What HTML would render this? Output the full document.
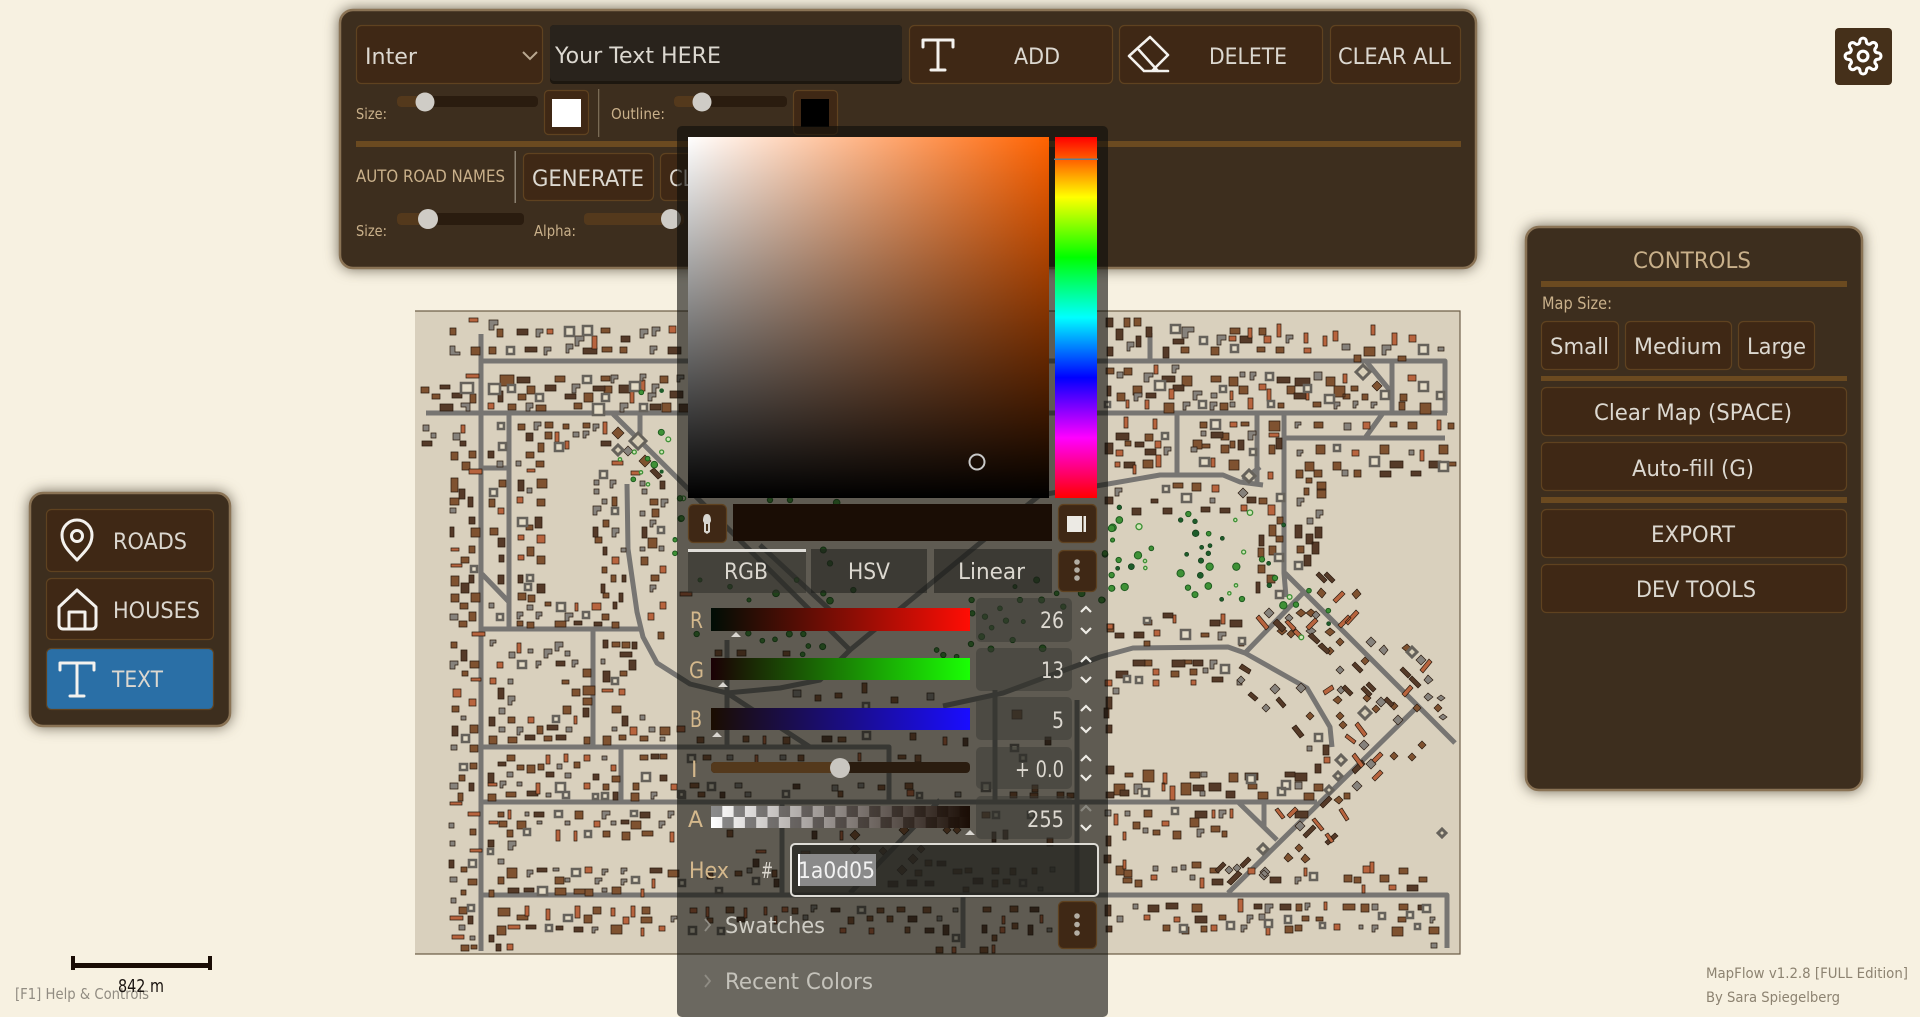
<!DOCTYPE html>
<html><head><meta charset="utf-8"><title>MapFlow</title>
<style>
html,body{margin:0;padding:0;background:#f7f1e1;overflow:hidden}
svg{display:block;position:absolute;left:0;top:0}
text{font-family:"DejaVu Sans","Liberation Sans",sans-serif;fill:#dcd8d0}
.t{fill:#c9b08a}
.s{filter:drop-shadow(0 0 7px rgba(40,30,15,.65))}
.b{fill:#3f2815;stroke:#5f4220;stroke-width:1.2}
.p{fill:#3d2e1e;stroke:#8a7355;stroke-width:2.5}
.ic{fill:none;stroke:#f4f2ee;stroke-width:3;stroke-linecap:round;stroke-linejoin:round}
.ch{fill:none;stroke:#eeece6;stroke-width:2.2}
</style></head><body>
<svg width="1920" height="1017" viewBox="0 0 1920 1017" xmlns="http://www.w3.org/2000/svg">
<defs>
<linearGradient id="hw"><stop offset="0" stop-color="#fff"/><stop offset="1" stop-color="#ff6200"/></linearGradient>
<linearGradient id="vb" x2="0" y2="1"><stop offset="0" stop-color="#000" stop-opacity="0"/><stop offset="1" stop-color="#000"/></linearGradient>
<linearGradient id="hue" x2="0" y2="1"><stop offset="0" stop-color="#f00"/><stop offset=".1667" stop-color="#ff0"/><stop offset=".3333" stop-color="#0f0"/><stop offset=".5" stop-color="#0ff"/><stop offset=".6667" stop-color="#00f"/><stop offset=".8333" stop-color="#f0f"/><stop offset="1" stop-color="#f00"/></linearGradient>
<linearGradient id="gr"><stop offset="0" stop-color="#000d05"/><stop offset="1" stop-color="#ff0d05"/></linearGradient>
<linearGradient id="gg"><stop offset="0" stop-color="#1a0005"/><stop offset="1" stop-color="#1aff05"/></linearGradient>
<linearGradient id="gb"><stop offset="0" stop-color="#1a0d00"/><stop offset="1" stop-color="#1a0dff"/></linearGradient>
<linearGradient id="ga"><stop offset="0" stop-color="#1a0d05" stop-opacity="0"/><stop offset="1" stop-color="#1a0d05"/></linearGradient>
<pattern id="chk" x="711" y="806" width="22.6" height="22" patternUnits="userSpaceOnUse"><rect width="22.6" height="22" fill="#fff"/><rect width="11.3" height="11" fill="#8c8c8c"/><rect x="11.3" y="11" width="11.3" height="11" fill="#8c8c8c"/></pattern>
<clipPath id="mapc"><rect x="415" y="311" width="1045" height="644"/></clipPath>
</defs>
<rect width="1920" height="1017" fill="#f7f1e1"/>

<!-- MAP -->
<rect x="415" y="311" width="1045" height="643" fill="#d9d0bd"/>
<path d="M415 311H1460V954H415" fill="none" stroke="#6f5f4a" stroke-width="1.2"/>
<g clip-path="url(#mapc)">
<g fill="none" stroke="#777572" stroke-width="5" stroke-linejoin="round">
<path d="M481 334V951M481 361H1445V413M426 413H1447M1150 333V361M1365 360L1392 393M1392 360V413"/>
<path d="M509 413V629M481 468H509M482 574L509 602M481 629H640M627 484L628 549L637 612L643 637L657 663L690 684L727 693L780 688L820 680L850 650"/>
<path d="M613 414L850 650L980 543L1040 495L1108 484L1160 475L1223 475L1240 482L1263 485M1243 480L1260 467M1257 413V485M1177 413V475M1284 413V573L1286 597"/>
<path d="M1284 438H1445M1365 438L1383 413M640 414V440M760 545L830 610"/>
<path d="M943 706L1003 693L1100 657L1133 648L1228 647L1245 653L1307 688L1330 727L1332 747M1285 573L1455 743M1245 653L1303 593M1417 707L1228 893"/>
<path d="M481 747H889V800M593 631V747M621 747V802M727 640V746M727 693L810 747M481 802H1317M1238 802L1277 840M1264 802V827M481 895H1447V948M782 802V893M1077 700V895M995 690V800M940 800L850 893M963 895V948"/>
</g>
<g stroke="#2a1a0e" stroke-width=".7">
<path fill="#7f5230" d="M450 328h6v7h-6zM497 329h6v8h-6zM601 328h9v5h-9zM471 347h9v8h-9zM489 347h7v7h-7zM602 347h10v5h-10zM620 347h7v6h-7zM500 375h14v11h-14zM555 376h10v6h-10zM601 376h9v5h-9zM660 376h8v7h-8zM421 387h8v6h-8zM527 386h8v8h-8zM604 386h8v7h-8zM432 394h8v5h-8zM470 394h6v9h-6zM518 394h8v6h-8zM584 393h9v9h-9zM508 404h8v6h-8zM536 405h10v6h-10zM574 403h8v6h-8zM662 403h9v9h-9zM1124 318h6v9h-6zM1134 318h7v8h-7zM1181 347h8v6h-8zM1230 328h10v6h-10zM1259 328h7v7h-7zM1211 347h8v8h-8zM1257 347h8v5h-8zM1276 347h8v6h-8zM1364 347h11v9h-11zM1354 355h7v7h-7zM1398 356h8v5h-8zM1106 368h8v6h-8zM1124 368h8v7h-8zM1182 376h10v10h-10zM1211 376h10v6h-10zM1229 377h9v9h-9zM1326 377h9v9h-9zM1133 386h9v9h-9zM1239 386h9v8h-9zM1287 386h8v8h-8zM1334 386h11v11h-11zM1351 386h7v5h-7zM1117 393h8v8h-8zM1343 394h7v5h-7zM1362 394h6v6h-6zM1400 394h7v7h-7zM1164 403h10v10h-10zM1220 403h8v7h-8zM1278 403h6v5h-6zM1313 402h8v5h-8zM1399 402h6v8h-6zM1420 403h11v11h-11zM1200 422h7v6h-7zM1241 422h8v4h-8zM1145 434h8v7h-8zM1221 433h8v7h-8zM1269 421h11v10h-11zM1193 440h9v9h-9zM1230 441h5v7h-5zM1125 441h6v5h-6zM1221 445h8v8h-8zM1202 444h8v4h-8zM1269 445h6v9h-6zM1143 460h10v8h-10zM1229 460h10v10h-10zM1314 422h9v6h-9zM1390 422h7v5h-7zM1408 422h9v7h-9zM1448 423h6v6h-6zM1316 445h9v9h-9zM1380 445h9v9h-9zM1439 445h9v9h-9zM1305 462h9v9h-9zM1333 462h8v8h-8zM1447 462h9v4h-9zM1296 470h7v8h-7zM1314 470h8v7h-8zM1354 470h7v7h-7zM1306 478h6v5h-6zM1304 488h5v7h-5zM1317 489h9v9h-9zM1317 482h9v8h-9zM1173 483h10v5h-10zM1192 483h9v8h-9zM1259 498h8v6h-8zM1277 517h6v7h-6zM1269 525h7v11h-7zM1276 536h7v6h-7zM1258 548h6v9h-6zM1269 546h7v9h-7zM1297 546h7v7h-7zM1258 565h7v8h-7zM1267 575h8v8h-8zM1144 620h8v5h-8zM1201 633h8v4h-8zM1107 624h7v8h-7zM1144 641h6v5h-6zM1239 641h5v5h-5z"/>
<path fill="#7f5230" d="M518 424h7v6h-7zM545 422h8v6h-8zM545 432h7v7h-7zM563 424h6v5h-6zM583 423h7v5h-7zM538 443h6v9h-6zM526 452h8v6h-8zM536 461h8v6h-8zM537 479h10v9h-10zM537 499h8v7h-8zM526 525h7v5h-7zM527 547h7v9h-7zM537 556h8v8h-8zM518 593h8v7h-8zM528 595h7v7h-7zM545 602h6v4h-6zM527 622h7v6h-7zM517 621h6v5h-6zM602 614h7v6h-7zM555 621h11v6h-11zM612 622h7v6h-7zM603 520h6v7h-6zM595 537h7v6h-7zM612 497h5v9h-5zM602 567h5v6h-5zM611 575h5v7h-5zM603 593h6v5h-6zM650 499h8v6h-8zM652 509h7v8h-7zM648 538h9v10h-9zM641 557h7v8h-7zM651 575h8v6h-8zM658 632h6v7h-6zM469 451h7v7h-7zM451 452h7v8h-7zM462 462h8v8h-8zM451 478h7v14h-7zM450 498h9v7h-9zM471 528h9v9h-9zM469 546h6v7h-6zM461 557h8v6h-8zM451 576h8v10h-8zM451 594h8v8h-8zM471 593h9v9h-9zM460 603h8v6h-8zM469 612h7v9h-7zM459 621h8v6h-8zM451 642h6v6h-6zM470 661h9v7h-9zM462 671h6v5h-6zM452 706h7v6h-7zM470 725h8v8h-8zM470 745h8v7h-8zM470 763h7v6h-7zM459 775h6v6h-6zM458 793h5v8h-5zM470 829h6v6h-6zM461 867h6v5h-6zM468 879h9v6h-9zM461 890h5v5h-5zM459 907h8v7h-8zM461 945h8v6h-8zM471 945h6v4h-6zM499 480h7v7h-7zM489 499h6v8h-6zM490 528h8v7h-8zM583 669h8v8h-8zM562 680h7v4h-7zM583 686h12v9h-12zM572 689h8v7h-8zM583 698h9v7h-9zM563 706h8v8h-8zM508 717h7v6h-7zM537 726h6v8h-6zM489 736h8v8h-8zM508 737h9v6h-9zM544 736h8v5h-8zM584 737h6v7h-6zM612 642h8v5h-8zM622 642h8v6h-8zM620 671h7v5h-7zM612 706h9v7h-9zM660 727h10v8h-10zM603 736h8v9h-8zM619 735h7v5h-7zM640 736h8v5h-8zM507 755h8v6h-8zM517 765h7v5h-7zM527 765h8v8h-8zM538 764h6v6h-6zM574 762h6v6h-6zM640 755h8v5h-8zM612 776h8v6h-8zM660 754h7v5h-7zM603 784h6v6h-6zM633 783h6v7h-6zM488 794h8v7h-8zM506 792h10v5h-10zM631 793h8v8h-8zM498 812h6v5h-6zM575 811h8v8h-8zM499 821h8v6h-8zM517 821h9v8h-9zM631 821h10v8h-10zM507 830h6v7h-6zM603 831h7v6h-7zM622 832h8v8h-8zM642 831h11v5h-11zM507 868h10v10h-10zM668 870h11v7h-11zM498 877h6v7h-6zM555 877h9v7h-9zM489 890h5v7h-5zM555 888h11v7h-11zM574 889h11v5h-11zM585 889h8v7h-8zM612 887h9v7h-9zM498 908h12v8h-12zM593 907h8v7h-8zM642 907h8v7h-8zM517 915h11v5h-11zM584 915h8v8h-8zM641 917h11v6h-11zM497 926h9v9h-9zM611 925h11v9h-11z"/>
<path fill="#7f5230" d="M1144 660h8v6h-8zM1183 660h9v4h-9zM1171 671h8v6h-8zM1190 669h7v6h-7zM1125 773h8v4h-8zM1143 770h11v12h-11zM1190 772h10v6h-10zM1229 773h9v9h-9zM1114 784h11v11h-11zM1181 783h10v12h-10zM1248 784h9v5h-9zM1314 784h9v7h-9zM1258 792h10v7h-10zM1304 793h10v7h-10zM1344 793h6v6h-6zM1144 810h8v7h-8zM1190 818h9v9h-9zM1133 822h7v7h-7zM1153 830h7v5h-7zM1173 831h8v8h-8zM1222 831h5v6h-5zM1211 826h9v6h-9zM1116 866h8v9h-8zM1124 870h8v7h-8zM1192 862h9v6h-9zM1210 868h9v5h-9zM1123 878h9v5h-9zM1135 880h7v7h-7zM1344 875h8v7h-8zM1354 877h7v6h-7zM1380 875h9v7h-9zM1399 868h9v6h-9zM1419 877h8v5h-8zM1192 904h10v8h-10zM1296 904h6v7h-6zM1343 904h12v6h-12zM1361 904h8v8h-8zM1399 904h9v6h-9zM1219 915h7v5h-7zM1302 916h7v5h-7zM1316 917h7v4h-7zM1398 917h8v5h-8zM1163 925h7v6h-7zM1182 927h7v7h-7zM1201 926h6v6h-6zM1285 926h8v7h-8zM1295 925h7v6h-7zM1429 927h10v7h-10zM1392 927h11v9h-11zM715 650h7v6h-7zM737 650h9v6h-9zM783 651h7v5h-7zM815 695h6v6h-6zM835 693h7v5h-7zM862 683h5v10h-5zM891 697h7v6h-7zM697 737h7v6h-7zM743 736h6v6h-6zM783 737h7v7h-7zM838 737h8v5h-8zM910 733h6v7h-6zM1012 710h10v9h-10zM703 755h8v5h-8zM798 755h6v6h-6zM898 755h8v4h-8zM915 755h6v7h-6zM690 783h9v5h-9zM878 785h7v5h-7zM905 783h8v6h-8zM1032 785h6v7h-6zM698 792h7v5h-7zM838 791h5v6h-5zM1010 792h7v6h-7zM1030 793h8v5h-8zM1057 792h7v6h-7zM1067 793h7v5h-7zM727 830h6v7h-6zM982 812h8v6h-8zM1047 838h6v8h-6zM772 870h5v7h-5zM735 871h7v5h-7zM707 873h6v6h-6zM925 860h7v6h-7zM915 870h7v6h-7zM953 869h9v5h-9zM965 868h7v5h-7zM992 868h7v6h-7zM1010 868h6v7h-6zM1032 868h5v6h-5zM992 880h6v7h-6zM1003 879h7v5h-7zM963 887h6v5h-6zM726 907h8v6h-8zM792 908h6v6h-6zM877 908h7v5h-7zM897 907h8v5h-8zM923 907h8v6h-8zM983 907h8v5h-8zM1010 906h8v6h-8zM707 918h6v5h-6zM848 917h6v7h-6zM867 916h6v5h-6zM887 916h6v6h-6zM1012 923h6v6h-6zM905 927h5v6h-5zM992 935h5v6h-5zM936 947h7v6h-7zM980 947h8v6h-8z"/>
<path fill="#553a28" d="M517 329h11v6h-11zM621 336h9v6h-9zM583 348h14v6h-14zM525 347h12v5h-12zM668 347h13v7h-13zM517 377h13v6h-13zM440 385h10v4h-10zM545 385h11v6h-11zM593 386h12v5h-12zM619 385h13v8h-13zM670 391h13v7h-13zM452 393h10v5h-10zM498 391h5v11h-5zM565 394h11v5h-11zM440 404h13v7h-13zM650 404h11v6h-11zM679 404h15v8h-15zM1106 318h7v9h-7zM1116 329h7v11h-7zM1146 327h6v10h-6zM1136 336h5v11h-5zM1107 347h6v9h-6zM1163 347h6v11h-6zM1173 339h11v5h-11zM1240 336h12v7h-12zM1162 376h13v6h-13zM1277 377h13v6h-13zM1295 378h15v8h-15zM1107 386h4v10h-4zM1173 385h11v6h-11zM1146 393h10v5h-10zM1294 393h13v6h-13zM1116 433h13v7h-13zM1211 432h12v6h-12zM1276 438h6v11h-6zM1105 443h8v11h-8zM1135 442h9v5h-9zM1238 440h6v10h-6zM1145 449h11v6h-11zM1124 462h11v6h-11zM1390 461h13v7h-13zM1429 461h12v7h-12zM1380 471h11v6h-11zM1411 471h10v5h-10zM1247 497h9v6h-9zM1105 497h8v7h-8zM1151 499h7v4h-7zM1132 508h9v7h-9zM1163 508h9v6h-9zM1201 507h9v5h-9zM1220 508h10v5h-10zM1315 527h7v11h-7zM1295 525h7v13h-7zM1259 535h5v11h-5zM1306 534h7v10h-7zM1312 542h7v12h-7zM1304 555h7v11h-7zM1256 582h4v11h-4zM1163 613h10v5h-10zM1210 620h10v6h-10zM1230 620h12v7h-12zM1115 633h9v5h-9zM1134 632h10v6h-10zM1133 660h12v6h-12zM1172 660h13v7h-13zM1193 660h10v6h-10zM1116 671h12v7h-12zM1212 677h11v5h-11zM1106 697h6v12h-6zM1104 708h5v10h-5zM1106 725h6v8h-6zM1106 766h8v8h-8zM1323 745h6v10h-6zM1315 764h6v9h-6zM1285 772h10v5h-10zM1245 773h13v7h-13zM1295 773h12v8h-12zM1193 785h11v6h-11zM1209 783h12v8h-12zM1106 792h8v6h-8zM1120 790h9v6h-9zM1226 791h9v7h-9zM1195 811h12v7h-12zM1295 811h13v7h-13zM1106 836h5v10h-5zM1104 855h7v8h-7zM1212 879h11v6h-11zM1270 877h11v6h-11zM1407 885h11v6h-11zM1105 905h6v11h-6zM1148 905h11v7h-11zM1166 903h12v6h-12zM1254 904h8v5h-8zM1280 904h11v6h-11zM1418 905h8v5h-8zM1195 916h12v7h-12zM1106 926h6v6h-6z"/>
<path fill="#553a28" d="M422 441h10v5h-10zM460 441h6v5h-6zM488 451h6v7h-6zM526 433h7v8h-7zM601 441h10v5h-10zM459 489h6v10h-6zM468 497h5v10h-5zM469 517h6v7h-6zM450 527h4v10h-4zM518 480h6v11h-6zM535 517h7v11h-7zM498 538h7v9h-7zM499 555h5v7h-5zM498 575h6v9h-6zM518 575h5v8h-5zM537 584h8v9h-8zM461 583h8v10h-8zM469 575h5v8h-5zM593 527h5v10h-5zM603 547h4v8h-4zM622 575h4v7h-4zM601 584h4v9h-4zM619 593h4v9h-4zM613 602h4v7h-4zM574 621h8v4h-8zM594 622h8v4h-8zM642 527h5v11h-5zM660 481h5v8h-5zM461 650h6v11h-6zM452 726h6v10h-6zM469 783h5v8h-5zM449 860h5v8h-5zM468 916h5v8h-5zM556 661h9v5h-9zM498 688h6v11h-6zM583 708h6v9h-6zM489 717h6v9h-6zM547 725h11v5h-11zM525 735h10v5h-10zM556 735h10v5h-10zM603 640h5v8h-5zM632 642h5v7h-5zM620 652h12v5h-12zM629 660h7v10h-7zM603 671h7v11h-7zM622 716h6v10h-6zM651 754h8v5h-8zM498 762h8v4h-8zM488 773h6v10h-6zM546 772h8v5h-8zM593 774h6v6h-6zM660 775h7v6h-7zM527 791h11v5h-11zM613 792h5v8h-5zM534 812h10v5h-10zM640 812h10v6h-10zM621 820h8v4h-8zM488 840h6v7h-6zM537 868h10v4h-10zM650 868h12v5h-12zM508 888h11v5h-11zM524 888h10v4h-10zM526 925h10v4h-10zM556 926h7v4h-7zM574 927h9v5h-9zM489 935h5v7h-5zM496 944h5v7h-5zM822 736h10v6h-10zM963 738h5v8h-5zM1045 737h6v8h-6zM793 784h7v5h-7zM720 792h5v6h-5zM812 831h5v8h-5zM992 832h4v10h-4zM1003 830h5v9h-5zM753 859h6v8h-6zM774 879h5v8h-5zM937 861h9v5h-9zM888 881h10v6h-10zM907 880h10v6h-10zM925 881h9v5h-9zM973 878h10v6h-10zM831 908h9v4h-9zM1030 907h9v5h-9zM737 917h8v5h-8zM908 916h9v6h-9zM925 928h9v5h-9zM943 925h6v10h-6zM982 925h5v8h-5zM1028 925h5v10h-5z"/>
<path fill="#b8643e" d="M469 318h9v4h-9zM547 329h6v5h-6zM592 336h5v13h-5zM669 326h7v7h-7zM466 374h13v4h-13zM640 380h5v11h-5zM630 391h4v12h-4zM488 403h6v6h-6zM1248 328h4v10h-4zM1264 336h7v7h-7zM1277 324h4v13h-4zM1229 336h7v5h-7zM1304 333h4v10h-4zM1323 336h4v10h-4zM1333 331h5v10h-5zM1371 325h4v10h-4zM1392 333h5v12h-5zM1409 335h7v7h-7zM1304 348h7v5h-7zM1154 365h4v9h-4zM1343 374h4v9h-4zM1408 375h8v6h-8zM1169 389h5v10h-5zM1259 384h7v6h-7zM1230 391h3v9h-3zM1267 389h4v12h-4zM1306 391h3v9h-3zM1126 400h3v8h-3zM1145 400h4v9h-4zM1248 398h5v11h-5zM1124 417h4v11h-4zM1153 419h4v10h-4zM1230 422h7v5h-7zM1269 433h10v4h-10zM1155 441h6v7h-6zM1116 450h7v6h-7zM1156 455h5v12h-5zM1211 458h4v9h-4zM1115 462h5v5h-5zM1133 465h3v9h-3zM1268 472h5v7h-5zM1352 450h7v6h-7zM1420 450h4v11h-4zM1363 422h7v7h-7zM1437 420h4v10h-4zM1212 485h7v7h-7zM1268 505h7v10h-7zM1241 505h6v6h-6zM1173 615h3v8h-3zM1221 614h4v10h-4zM1107 624h6v5h-6zM1154 630h6v6h-6zM1153 669h6v6h-6zM1105 680h7v6h-7zM1153 680h6v6h-6zM1191 680h5v5h-5zM1324 757h6v6h-6zM1163 773h4v11h-4zM1162 783h3v8h-3zM1170 786h5v14h-5zM1212 810h3v8h-3zM1230 809h3v9h-3zM1114 814h4v11h-4zM1162 821h7v5h-7zM1123 832h3v8h-3zM1123 860h3v9h-3zM1200 878h4v10h-4zM1151 875h6v5h-6zM1248 868h7v6h-7zM1304 868h3v8h-3zM1363 866h7v7h-7zM1370 862h4v11h-4zM1362 885h3v8h-3zM1389 885h7v5h-7zM1238 899h5v13h-5zM1324 902h3v8h-3zM1144 915h6v5h-6zM1174 917h6v5h-6zM1266 925h4v10h-4zM1211 925h6v6h-6zM1334 924h6v6h-6zM461 425h4v8h-4zM555 432h4v10h-4zM565 441h4v8h-4zM603 422h4v12h-4zM527 469h8v3h-8zM517 497h6v6h-6zM518 535h6v5h-6zM537 535h8v8h-8zM518 555h6v5h-6zM575 603h3v8h-3zM592 603h9v7h-9zM469 469h13v5h-13zM498 508h6v6h-6zM612 461h11v4h-11zM631 471h9v4h-9zM612 557h7v7h-7zM660 566h6v7h-6zM680 592h12v4h-12zM660 602h6v7h-6zM648 613h6v7h-6zM451 548h8v3h-8zM451 564h11v3h-11zM472 632h13v4h-13zM471 678h10v3h-10zM453 689h8v8h-8zM469 699h7v7h-7zM450 802h12v3h-12zM468 812h12v4h-12zM470 849h12v3h-12zM450 916h13v4h-13zM452 935h12v4h-12zM517 643h4v10h-4zM497 662h6v6h-6zM490 678h6v6h-6zM528 717h6v6h-6zM574 716h3v8h-3zM602 689h11v3h-11zM619 689h6v6h-6zM630 727h7v8h-7zM677 726h8v6h-8zM546 755h4v9h-4zM564 754h4v8h-4zM584 755h6v6h-6zM611 765h5v6h-5zM488 783h9v3h-9zM536 783h4v11h-4zM584 783h6v6h-6zM671 784h6v6h-6zM508 810h3v9h-3zM489 821h9v3h-9zM594 821h6v6h-6zM556 830h4v11h-4zM574 831h3v10h-3zM670 832h4v10h-4zM585 867h7v6h-7zM652 879h3v9h-3zM641 889h3v8h-3zM525 906h4v10h-4zM546 909h4v11h-4zM575 906h5v12h-5zM611 908h4v8h-4zM631 906h4v11h-4zM623 917h6v7h-6zM641 928h3v8h-3zM659 926h6v5h-6zM508 925h12v4h-12zM507 944h6v6h-6zM763 736h3v8h-3zM943 737h4v8h-4zM755 755h3v8h-3zM858 753h3v8h-3zM907 790h7v6h-7zM840 831h3v9h-3zM756 850h10v3h-10zM801 851h9v3h-9zM690 908h7v5h-7zM706 907h3v10h-3zM744 908h3v10h-3zM764 907h3v8h-3zM782 907h6v5h-6zM774 916h3v8h-3zM1002 916h3v8h-3zM1040 915h3v8h-3zM840 928h6v5h-6zM869 928h5v6h-5zM1000 927h5v6h-5zM952 947h4v6h-4zM992 945h3v8h-3z"/>
<path fill="#86827c" d="M489 320h9v5h-4v5h-5zM536 329h7v4h-3v4h-4zM640 329h8v5h-4v4h-4zM652 327h8v4h-4v5h-4zM575 336h9v5h-5v5h-4zM450 346h5v6h5v3h-10zM544 347h7v4h-4v4h-3zM566 344h7v5h-4v4h-3zM650 346h7v4h-3v4h-4zM611 375h7v4h-4v4h-3zM640 374h6v4h-3v3h-3zM677 375h7v4h-4v3h-3zM572 384h8v4h-4v5h-4zM652 384h7v4h-3v5h-4zM648 393h8v4h-4v4h-4zM461 403h9v8h-4v-4h-5zM526 403h7v5h-3v3h-4zM620 403h8v5h-4v4h-4zM1127 342h7v5h-4v4h-3zM1182 327h12v5h-6v6h-6zM1217 335h9v5h-5v5h-4zM1286 335h7v4h-4v4h-3zM1342 344h8v6h-8zM1382 345h9v5h-5v5h-4zM1438 347h6v4h-6zM1117 372h6v6h-6zM1144 373h9v4h-4v5h-5zM1172 365h7v4h-3v4h-4zM1240 372h5v5h-5zM1250 372h6v4h-2v4h-4zM1314 372h8v8h-8zM1134 393h8v4h-4v4h-4zM1193 391h9v4h-5v5h-4zM1211 393h6v5h-6zM1183 402h7v4h-4v4h-3zM1210 402h7v4h-3v4h-4zM1230 402h5v5h-5zM1334 402h6v4h-3v3h-3zM1353 401h5v4h-2v3h-3zM1371 402h6v3h-3v3h-3zM1201 431h5v5h-5zM1248 431h8v4h-3v5h-5zM1295 422h6v3h-3v3h-3zM1344 423h7v7h-7zM1164 447h7v4h-3v4h-4zM1191 447h6v5h-6zM1297 450h6v3h-2v3h-4zM1409 450h5v5h-5zM1342 470h6v6h-6zM1115 488h7v4h-3v4h-4zM1210 498h5v5h-5zM1297 498h7v4h-3v4h-4zM1316 510h7v5h-3v3h-4zM1307 518h6v6h-6zM1218 632h8v4h-4v4h-4zM1210 660h7v4h-3v5h-4zM1203 668h5v5h-5zM1113 688h6v6h-6zM1237 680h5v5h-5zM1307 746h5v5h-5zM1201 772h6v5h-6zM1295 782h7v7h-7zM1134 784h8v5h-4v5h-4zM1200 791h5v5h-5zM1105 810h6v6h-6zM1125 811h5v5h-5zM1219 810h7v4h-3v4h-4zM1197 829h7v4h-3v4h-4zM1143 828h5v5h-5zM1153 866h5v5h-5zM1172 867h5v5h-5zM1181 865h5v5h-5zM1190 875h5v5h-5zM1295 877h6v4h-3v3h-3zM1133 904h5v5h-5zM1265 904h8v4h-3v5h-5zM1305 903h5v4h-2v3h-3zM1372 904h6v6h-6zM1117 916h6v6h-6zM1247 915h6v4h-3v4h-3zM1259 914h6v6h-6zM1430 917h5v3h-2v3h-3zM1241 925h6v4h-3v3h-3zM1359 925h4v4h-4zM1372 925h6v4h-3v3h-3zM1431 943h6v5h-6zM423 425h6v6h-6zM453 433h7v7h-7zM431 433h5v5h-5zM534 422h7v4h-3v4h-4zM573 432h6v5h-6zM593 424h6v4h-3v3h-3zM583 431h6v4h-3v3h-3zM516 461h5v5h-5zM527 488h5v5h-5zM497 461h6v6h-6zM594 480h5v5h-5zM610 480h6v4h-3v4h-3zM594 489h5v5h-5zM602 499h5v5h-5zM593 506h8v5h-4v4h-4zM612 528h7v5h-3v4h-4zM621 548h5v4h-5zM640 481h5v5h-5zM642 489h5v5h-5zM661 499h7v4h-3v4h-4zM640 511h5v5h-5zM650 520h6v4h-3v3h-3zM659 546h5v5h-5zM640 547h5v4h-5zM650 585h6v4h-3v3h-3zM450 508h6v5h-6zM450 614h8v6h-8zM450 661h8v4h-3v4h-5zM461 716h5v4h-5zM451 745h6v5h-6zM450 783h8v6h-8zM449 823h5v5h-5zM450 841h5v5h-5zM450 877h7v5h-7zM451 898h5v5h-5zM459 925h6v5h-6zM470 936h5v4h-5zM489 603h5v5h-5zM527 605h6v5h-6zM517 612h6v4h-3v3h-3zM536 612h6v4h-3v3h-3zM565 613h8v4h-4v4h-4zM490 640h6v3h-3v3h-3zM509 652h6v6h-6zM528 649h5v4h-5zM544 649h8v5h-4v4h-4zM555 642h8v5h-4v4h-4zM565 651h5v5h-5zM536 661h5v4h-3v3h-2zM572 660h6v4h-3v3h-3zM508 679h5v5h-5zM508 696h7v5h-3v4h-4zM499 708h6v6h-6zM499 727h6v5h-6zM517 727h6v5h-3v3h-3zM566 727h6v5h-6zM601 659h4v5h-4zM640 715h5v5h-5zM612 727h5v4h-5zM649 727h6v5h-6zM660 737h5v4h-5zM602 756h5v4h-5zM557 764h5v5h-5zM507 772h6v5h-6zM565 773h6v5h-6zM500 781h6v4h-3v3h-3zM517 782h5v4h-5zM546 793h5v4h-5zM651 792h6v4h-3v3h-3zM525 812h4v4h-4zM602 811h8v4h-4v4h-4zM668 811h6v4h-3v3h-3zM537 821h5v3h-5zM565 821h5v4h-5zM611 821h5v4h-5zM659 821h6v4h-3v3h-3zM508 841h8v5h-3v4h-5zM498 859h6v5h-6zM527 870h6v4h-3v3h-3zM553 868h6v3h-6zM602 869h6v3h-3v3h-3zM621 868h6v3h-3v3h-3zM565 878h5v4h-5zM595 878h7v3h-3v3h-4zM621 879h6v3h-3v3h-3zM602 888h5v4h-5zM671 916h6v3h-3v3h-3zM592 927h6v3h-3v3h-3zM793 690h8v7h-8zM927 693h7v7h-7zM727 755h6v5h-6zM780 755h6v5h-6zM735 783h7v5h-7zM832 785h6v6h-6zM858 783h6v5h-6zM745 792h6v5h-6zM955 792h6v5h-6zM747 868h5v5h-5zM1050 867h5v5h-5zM1038 887h5v4h-5zM811 905h6v4h-3v3h-3zM953 908h5v4h-5zM803 915h5v5h-5zM937 916h5v5h-5zM1047 928h5v4h-5z"/>
<path fill="#7f5230" d="M612 433l6-6 6 6-6 6zM639 461l6-6 6 6-6 6zM1372 386l5-5 5 5-5 5zM1296 613l5-4 5 4-5 4zM1306 613l5-4 5 4-5 4zM1317 593l4-5 5 5-4 5zM1352 594l5-5 4 5-5 5zM1277 631l5-4 5 4-5 4zM1287 634l4-4 4 4-4 4zM1325 632l5-4 5 4-5 4zM1336 642l4-4 4 4-4 4zM1326 651l4-4 4 4-4 4zM1361 661l4-4 4 4-4 4zM1402 648l5-4 4 4-4 4zM1333 700l5-4 4 4-4 4zM1363 698l4-4 4 4-4 4zM1390 706l4-4 4 4-4 4zM1336 716l4-4 4 4-4 4zM1306 716l4-4 4 4-4 4zM1339 725l4-4 4 4-4 4zM1372 709l4-4 4 4-4 4zM1413 708l4-4 4 4-4 4zM1434 708l4-4 4 4-4 4zM1418 745l4-4 4 4-4 4zM1390 756l4-4 4 4-4 4zM1408 757l4-4 4 4-4 4zM1284 858l4-5 5 5-5 4zM1301 859l4-5 5 5-5 4zM1295 848l4-4 4 4-4 4zM1334 800l5-4 4 4-4 4zM850 835l5-5 5 5-5 5zM899 830l5-5 5 5-5 5zM943 830l4-4 4 4-4 4zM953 830l4-4 4 4-4 4zM850 849l5-5 5 5-5 5zM879 851l4-4 4 4-4 4zM917 849l4-4 4 4-4 4zM908 859l5-5 5 5-5 5zM897 870l5-5 5 5-5 5z"/>
<path fill="#86827c" d="M623 451l5-5 5 5-5 5zM1238 493l5-5 5 5-5 5zM1264 613l5-5 5 5-5 5zM1366 642l5-5 5 5-5 5zM1285 618l4-4 4 4-4 4zM1312 615l4-4 4 4-4 4zM1306 631l5-4 5 4-5 4zM1379 650l5-5 4 5-4 5zM1336 670l4-4 4 4-4 4zM1376 702l5-5 5 5-5 5zM1416 660l5-5 5 5-5 5zM1424 680l4-5 5 5-5 4zM1424 697l4-4 5 4-5 4zM1437 698l4-3 4 3-4 3zM1439 717l4-3 4 3-4 3zM1393 720l5-5 5 5-5 5zM1337 690l4-4 4 4-4 4zM1262 708l4-4 4 4-4 4zM1296 688l5-5 5 5-5 5zM1270 689l5-5 5 5-5 5zM1237 680l4-4 4 4-4 4zM1359 745l5-5 5 5-5 5zM1352 786l5-5 5 5-5 5zM1259 875l5-5 5 5-5 5zM1225 870l4-4 4 4-4 4zM1295 826l5-5 5 5-5 5zM1233 868l4-4 4 4-4 4zM1260 872l5-5 5 5-5 5zM1366 764l5-5 5 5-5 5z"/>
<path fill="#553a28" d="M650 471l8 8 4-3-8-8zM1273 623l9 9 4-4-9-9zM1308 636l9 8 3-3-8-8zM1318 646l9 8 3-3-8-8zM1316 575l8 8 3-3-8-8zM1324 575l8 8 3-3-8-8zM1352 665l8 8 3-3-8-8zM1342 688l8 8 3-3-8-8zM1400 670l8 8 3-3-8-8zM1409 679l9 9 3-3-9-9zM1361 689l8 8 3-3-8-8zM1366 685l7 7 3-3-7-7zM1384 700l7 7 3-3-7-7zM1292 728l8 10 4-3-8-10zM1239 668l10 6 2-4-9-6zM1248 695l7 6 3-3-7-6zM1276 700l7 8 3-3-7-8zM1352 770l10-10 3 4-10 10zM1227 882l11-11 4 3-11 11zM1215 870l8-8 3 3-8 8zM1240 865l8-8 3 3-8 8zM1320 805l9-9 3 3-9 9zM1303 835l10-10 3 3-10 10zM1325 842l10-9 3 3-10 9z"/>
<path fill="#b8643e" d="M1256 618l10 12 3-3-10-12zM1285 622l8 9 3-3-8-8zM1293 632l7 7 3-3-7-7zM1306 627l9-9 3 3-9 9zM1333 600l9-9 3 3-9 9zM1338 625l10-10 3 3-10 10zM1345 622l11-12 3 3-11 12zM1323 691l9-6 2 4-9 6zM1355 725l9 12 3-3-9-12zM1420 670l9-11 3 3-9 11zM1372 760l8-8 3 3-8 8zM1345 737l9 7 2-3-9-7zM1352 756l9 12 3-3-9-12zM1410 685l-8 9 3 3 8-9zM1287 815l8-8 3 3-8 8zM1339 810l7 11 3-2-7-11zM1380 770l-8 8 3 3 8-8zM1275 810l7 9 3-2-7-9zM1325 835l6 8 3-2-6-8zM1312 820l9 11 3-2-9-11z"/>
</g>
<path d="M565 327h9v9h-9zM583 326h9v9h-9zM507 347h7v7h-7zM461 383h12v10h-12zM489 384h11v10h-11zM508 385h7v7h-7zM583 376h8v7h-8zM630 382h10v9h-10zM536 394h7v7h-7zM602 394h7v7h-7zM593 404h11v11h-11zM640 404h7v7h-7zM1171 325h9v8h-9zM1200 337h7v7h-7zM1231 345h7v7h-7zM1419 345h9v9h-9zM1155 381h10v9h-10zM1220 386h6v6h-6zM1266 373h7v7h-7zM1304 385h7v7h-7zM1325 395h9v8h-9zM1381 391h8v8h-8zM1419 382h9v9h-9zM1437 392h7v7h-7zM1105 402h5v5h-5zM1199 401h7v7h-7zM1268 401h6v6h-6zM1211 420h9v9h-9zM1162 433h6v6h-6zM1250 449h6v6h-6zM1200 458h9v8h-9zM1334 445h6v6h-6zM1370 457h9v9h-9zM1439 462h9v9h-9zM1163 486h6v6h-6zM1182 494h9v8h-9zM1277 494h7v7h-7zM1275 554h8v7h-8zM1295 562h7v7h-7zM1276 591h7v7h-7zM1181 630h9v9h-9zM1239 638h6v6h-6zM1144 618h6v5h-6zM1221 665h8v8h-8zM1124 676h6v6h-6zM1136 677h6v6h-6zM1315 734h7v7h-7zM1142 789h7v7h-7zM1247 775h8v8h-8zM1278 788h7v7h-7zM1172 808h6v6h-6zM1282 781h8v8h-8zM1310 873h7v7h-7zM1180 925h7v7h-7zM1285 916h6v7h-6zM1379 913h6v6h-6zM1407 912h6v6h-6zM1423 905h7v7h-7zM1227 922h7v7h-7zM1265 920h7v7h-7zM1320 923h5v5h-5zM1415 924h5v5h-5zM498 423h6v6h-6zM499 443h7v7h-7zM490 489h7v7h-7zM555 443h8v8h-8zM518 518h9v8h-9zM527 575h6v6h-6zM525 584h6v6h-6zM471 566h6v6h-6zM462 735h7v7h-7zM497 614h6v6h-6zM557 603h8v8h-8zM583 612h6v6h-6zM600 471h7v7h-7zM612 508h6v6h-6zM658 527h6v6h-6zM612 678h6v6h-6zM518 661h8v7h-8zM553 716h6v6h-6zM642 773h8v8h-8zM460 764h7v6h-7zM469 860h7v7h-7zM468 905h6v6h-6zM556 783h9v9h-9zM563 792h6v6h-6zM593 794h5v5h-5zM602 793h6v6h-6zM678 791h6v6h-6zM555 811h7v6h-7zM631 811h6v5h-6zM524 829h6v6h-6zM585 831h6v6h-6zM488 849h5v5h-5zM572 869h8v7h-8zM632 877h7v6h-7zM538 887h9v8h-9zM564 915h8v6h-8zM546 925h6v6h-6zM863 703h6v6h-6zM863 732h7v7h-7zM688 755h7v7h-7zM1011 745h7v6h-7zM1020 755h6v6h-6zM708 783h7v7h-7zM982 783h8v8h-8zM679 792h6v6h-6zM783 791h6v6h-6zM917 793h5v5h-5zM993 812h6v6h-6zM1028 812h6v6h-6zM679 880h6v6h-6zM716 888h6v5h-6zM753 878h6v6h-6zM1020 880h6v6h-6zM858 907h7v6h-7zM689 927h7v7h-7zM718 928h6v6h-6zM953 935h6v6h-6z" fill="#e3dbc6" stroke="#66625b" stroke-width="2.6"/>
<path d="M630 441l8-8 8 8-8 8zM613 450l5-5 5 5-5 5zM1243 476l6-6 6 6-6 6zM1356 372l7-7 7 7-7 7zM1359 713l6-6 6 6-6 6zM1407 652l5-5 5 5-5 5zM1258 849l5-5 5 5-5 5zM1336 760l5-5 5 5-5 5zM1325 790l4-4 4 4-4 4zM1438 833l4-4 4 4-4 4zM1334 776l4-4 4 4-4 4z" fill="#d8cfb8" stroke="#66625b" stroke-width="3"/>
<!-- trees -->
<g transform="translate(1100 480) scale(.3333)">
<g fill="#3f9136" stroke="#1f5c20" stroke-width="3"><circle cx="58" cy="120" r="10"/><circle cx="38" cy="143" r="11"/><circle cx="326" cy="161" r="7"/><circle cx="265" cy="102" r="8"/><circle cx="114" cy="226" r="11"/><circle cx="56" cy="240" r="8"/><circle cx="242" cy="280" r="11"/><circle cx="329" cy="260" r="11"/><circle cx="409" cy="260" r="11"/><circle cx="74" cy="321" r="11"/><circle cx="264" cy="323" r="8"/><circle cx="325" cy="318" r="10"/><circle cx="285" cy="344" r="9"/><circle cx="426" cy="357" r="8"/><circle cx="486" cy="238" r="8"/><circle cx="525" cy="294" r="8"/><circle cx="550" cy="376" r="11"/><circle cx="588" cy="374" r="8"/><circle cx="627" cy="332" r="7"/><circle cx="685" cy="392" r="7"/><circle cx="154" cy="205" r="7"/></g>
<g fill="#1e5c2a" stroke="#123a18" stroke-width="2"><circle cx="58" cy="82" r="7"/><circle cx="242" cy="120" r="7"/><circle cx="285" cy="124" r="7"/><circle cx="287" cy="160" r="10"/><circle cx="367" cy="175" r="6"/><circle cx="15" cy="223" r="9"/><circle cx="94" cy="260" r="9"/><circle cx="53" cy="265" r="6"/><circle cx="301" cy="286" r="9"/><circle cx="303" cy="242" r="8"/><circle cx="325" cy="220" r="7"/><circle cx="260" cy="223" r="6"/><circle cx="305" cy="202" r="6"/><circle cx="330" cy="197" r="6"/><circle cx="35" cy="286" r="8"/><circle cx="36" cy="325" r="9"/><circle cx="365" cy="358" r="6"/><circle cx="506" cy="250" r="6"/><circle cx="508" cy="316" r="7"/><circle cx="686" cy="431" r="6"/><circle cx="551" cy="135" r="6"/><circle cx="8" cy="360" r="8"/></g>
<g fill="#cfe5b8" stroke="#3f9136" stroke-width="4"><circle cx="117" cy="140" r="9"/><circle cx="37" cy="181" r="5"/><circle cx="450" cy="98" r="8"/><circle cx="406" cy="120" r="5"/><circle cx="135" cy="243" r="5"/><circle cx="136" cy="264" r="5"/><circle cx="431" cy="216" r="6"/><circle cx="388" cy="340" r="5"/><circle cx="408" cy="316" r="5"/><circle cx="569" cy="351" r="7"/><circle cx="604" cy="472" r="7"/></g>
</g>
<g transform="translate(410 300) scale(.3333)">
<g fill="#3f9136" stroke="#1f5c20" stroke-width="3"><circle cx="694" cy="277" r="7"/><circle cx="754" cy="397" r="9"/><circle cx="713" cy="476" r="7"/><circle cx="733" cy="494" r="10"/><circle cx="670" cy="538" r="7"/><circle cx="813" cy="656" r="9"/><circle cx="795" cy="760" r="7"/></g>
<g fill="#1e5c2a"><circle cx="755" cy="272" r="7"/><circle cx="755" cy="515" r="6"/><circle cx="795" cy="718" r="7"/></g>
<g fill="#cfe5b8" stroke="#3f9136" stroke-width="4"><circle cx="775" cy="418" r="7"/><circle cx="673" cy="456" r="6"/><circle cx="755" cy="456" r="6"/><circle cx="630" cy="478" r="5"/><circle cx="693" cy="517" r="5"/><circle cx="714" cy="553" r="5"/><circle cx="820" cy="595" r="7"/></g>
</g>
<g transform="translate(670 480) scale(.3333)" fill="#3f9136" stroke="#1f5c20" stroke-width="3">
<circle cx="300" cy="60" r="8"/><circle cx="360" cy="60" r="8"/><circle cx="500" cy="68" r="10"/><circle cx="460" cy="210" r="9"/><circle cx="480" cy="250" r="8"/><circle cx="90" cy="300" r="6"/><circle cx="180" cy="320" r="7"/><circle cx="380" cy="300" r="7"/><circle cx="318" cy="340" r="10"/><circle cx="460" cy="340" r="8"/><circle cx="550" cy="330" r="8"/><circle cx="480" cy="362" r="10"/><circle cx="1100" cy="300" r="9"/><circle cx="1035" cy="320" r="6"/><circle cx="1160" cy="340" r="7"/><circle cx="905" cy="360" r="8"/><circle cx="1115" cy="360" r="9"/><circle cx="1235" cy="340" r="10"/><circle cx="1295" cy="360" r="9"/><circle cx="30" cy="55" r="8"/><circle cx="35" cy="115" r="8"/><circle cx="15" cy="180" r="6"/><circle cx="1325" cy="145" r="10"/><circle cx="1328" cy="180" r="6"/><circle cx="1305" cy="220" r="8"/><circle cx="1325" cy="285" r="8"/><circle cx="1325" cy="325" r="9"/><circle cx="80" cy="462" r="8"/><circle cx="235" cy="460" r="8"/><circle cx="358" cy="462" r="9"/><circle cx="400" cy="462" r="8"/><circle cx="277" cy="482" r="7"/><circle cx="315" cy="478" r="7"/><circle cx="415" cy="498" r="7"/><circle cx="458" cy="500" r="9"/><circle cx="237" cy="360" r="6"/><circle cx="907" cy="400" r="8"/><circle cx="945" cy="410" r="8"/><circle cx="990" cy="385" r="7"/><circle cx="1050" cy="360" r="8"/><circle cx="1180" cy="380" r="8"/><circle cx="1008" cy="422" r="8"/><circle cx="1060" cy="425" r="6"/><circle cx="965" cy="443" r="7"/><circle cx="935" cy="470" r="9"/><circle cx="1028" cy="480" r="8"/><circle cx="1118" cy="505" r="10"/><circle cx="963" cy="507" r="9"/><circle cx="820" cy="525" r="8"/><circle cx="800" cy="510" r="7"/><circle cx="860" cy="530" r="7"/><circle cx="903" cy="492" r="8"/><circle cx="398" cy="523" r="7"/>
</g>
</g>

<!-- TOP PANEL -->
<rect class="p s" x="340" y="10" width="1136" height="258" rx="13"/>
<rect class="b" x="356.5" y="25.5" width="186" height="58" rx="5"/>
<text x="365" y="64" font-size="22" textLength="52" lengthAdjust="spacingAndGlyphs">Inter</text>
<path d="M523 52l7 7 7-7" fill="none" stroke="#b9a890" stroke-width="2"/>
<rect x="550" y="25" width="352" height="59" rx="4" fill="#1d170f"/>
<rect x="550" y="25" width="352" height="56" rx="4" fill="#29231c"/>
<text x="555" y="63" font-size="22" textLength="166" lengthAdjust="spacingAndGlyphs">Your Text HERE</text>
<rect class="b" x="909.5" y="25.5" width="203" height="58" rx="5"/>
<path class="ic" d="M923 47v-7h30v7M938 40v30M931 70h14"/>
<text x="1014" y="64" font-size="22" textLength="46" lengthAdjust="spacingAndGlyphs">ADD</text>
<rect class="b" x="1119.5" y="25.5" width="203" height="58" rx="5"/>
<path class="ic" d="M1150 37l18 18-16 16h-8l-15-15zM1139 50l19 21M1144 71h24" style="stroke-width:2.6"/>
<text x="1209" y="64" font-size="22" textLength="78" lengthAdjust="spacingAndGlyphs">DELETE</text>
<rect class="b" x="1330.5" y="25.5" width="130" height="58" rx="5"/>
<text x="1338" y="64" font-size="22" textLength="113" lengthAdjust="spacingAndGlyphs">CLEAR ALL</text>
<!-- sliders row 1 -->
<rect x="397" y="96" width="141" height="11" rx="4" fill="#2a1c0f"/><rect x="397" y="96" width="28" height="11" rx="4" fill="#54391c"/><circle cx="425" cy="102" r="9.5" fill="#cfccc6"/>
<text class="t" x="356" y="119" font-size="15" textLength="31" lengthAdjust="spacingAndGlyphs">Size:</text>
<rect class="b" x="544.5" y="90.5" width="44" height="44" rx="4"/><rect x="552" y="99" width="29" height="28" fill="#fff"/>
<rect x="598" y="89" width="1.3" height="48" fill="#7a6b55"/>
<text class="t" x="611" y="119" font-size="15" textLength="54" lengthAdjust="spacingAndGlyphs">Outline:</text>
<rect x="674" y="96" width="113" height="11" rx="4" fill="#2a1c0f"/><rect x="674" y="96" width="28" height="11" rx="4" fill="#54391c"/><circle cx="702" cy="102" r="9.5" fill="#cfccc6"/>
<rect class="b" x="793.5" y="90.5" width="44" height="44" rx="4"/><rect x="801" y="99" width="28" height="28" fill="#000"/>
<rect x="356" y="141" width="1105" height="6" fill="#6b4a20"/>
<text class="t" x="356" y="182" font-size="16.5" textLength="149" lengthAdjust="spacingAndGlyphs">AUTO ROAD NAMES</text>
<rect x="514.5" y="151" width="1.5" height="52" fill="#8a8070"/>
<rect class="b" x="523.5" y="153.5" width="130" height="47" rx="5"/>
<text x="532" y="186" font-size="22" textLength="112" lengthAdjust="spacingAndGlyphs">GENERATE</text>
<rect class="b" x="660.5" y="153.5" width="80" height="47" rx="5"/>
<text x="669" y="186" font-size="22" textLength="64" lengthAdjust="spacingAndGlyphs">CLEAR</text>
<rect x="397" y="213" width="127" height="12" rx="4" fill="#2a1c0f"/><rect x="397" y="213" width="31" height="12" rx="4" fill="#54391c"/><circle cx="428" cy="219" r="10" fill="#cfccc6"/>
<text class="t" x="356" y="236" font-size="15" textLength="31" lengthAdjust="spacingAndGlyphs">Size:</text>
<text class="t" x="534" y="236" font-size="15" textLength="42" lengthAdjust="spacingAndGlyphs">Alpha:</text>
<rect x="584" y="213" width="100" height="12" rx="4" fill="#54391c"/><circle cx="671" cy="219" r="10" fill="#cfccc6"/>

<!-- GEAR -->
<rect x="1835" y="28" width="57" height="57" rx="4" fill="#45301a"/>
<g transform="translate(1843.5 36.5) scale(1.63)" fill="none" stroke="#fff" stroke-width="1.9" stroke-linecap="round" stroke-linejoin="round"><circle cx="12" cy="12" r="3"/><path d="M19.4 15a1.65 1.65 0 0 0 .33 1.82l.06.06a2 2 0 0 1 0 2.83 2 2 0 0 1-2.83 0l-.06-.06a1.65 1.65 0 0 0-1.82-.33 1.65 1.65 0 0 0-1 1.51V21a2 2 0 0 1-2 2 2 2 0 0 1-2-2v-.09A1.65 1.65 0 0 0 9 19.4a1.65 1.65 0 0 0-1.82.33l-.06.06a2 2 0 0 1-2.83 0 2 2 0 0 1 0-2.83l.06-.06a1.65 1.65 0 0 0 .33-1.82 1.65 1.65 0 0 0-1.51-1H3a2 2 0 0 1-2-2 2 2 0 0 1 2-2h.09A1.65 1.65 0 0 0 4.6 9a1.65 1.65 0 0 0-.33-1.82l-.06-.06a2 2 0 0 1 0-2.83 2 2 0 0 1 2.83 0l.06.06a1.65 1.65 0 0 0 1.82.33H9a1.65 1.65 0 0 0 1-1.51V3a2 2 0 0 1 2-2 2 2 0 0 1 2 2v.09a1.65 1.65 0 0 0 1 1.51 1.65 1.65 0 0 0 1.82-.33l.06-.06a2 2 0 0 1 2.83 0 2 2 0 0 1 0 2.83l-.06.06a1.65 1.65 0 0 0-.33 1.82V9a1.65 1.65 0 0 0 1.51 1H21a2 2 0 0 1 2 2 2 2 0 0 1-2 2h-.09a1.65 1.65 0 0 0-1.51 1z"/></g>

<!-- CONTROLS -->
<rect class="p s" x="1526" y="227" width="336" height="563" rx="13"/>
<text class="t" x="1633" y="268" font-size="22" textLength="118" lengthAdjust="spacingAndGlyphs">CONTROLS</text>
<rect x="1541" y="281" width="306" height="6" fill="#6b4a20"/>
<text class="t" x="1542" y="309" font-size="16.5" textLength="70" lengthAdjust="spacingAndGlyphs">Map Size:</text>
<rect class="b" x="1541.5" y="321.5" width="77" height="48" rx="5"/><rect class="b" x="1625.5" y="321.5" width="106" height="48" rx="5"/><rect class="b" x="1738.5" y="321.5" width="76" height="48" rx="5"/>
<text x="1550" y="354" font-size="22" textLength="59" lengthAdjust="spacingAndGlyphs">Small</text>
<text x="1634" y="354" font-size="22" textLength="88" lengthAdjust="spacingAndGlyphs">Medium</text>
<text x="1747" y="354" font-size="22" textLength="59" lengthAdjust="spacingAndGlyphs">Large</text>
<rect x="1541" y="376" width="306" height="5" fill="#6b4a20"/>
<rect class="b" x="1541.5" y="387.5" width="305" height="48" rx="5"/>
<text x="1594" y="420" font-size="22" textLength="198" lengthAdjust="spacingAndGlyphs">Clear Map (SPACE)</text>
<rect class="b" x="1541.5" y="442.5" width="305" height="48" rx="5"/>
<text x="1632" y="476" font-size="22" textLength="122" lengthAdjust="spacingAndGlyphs">Auto-fill (G)</text>
<rect x="1541" y="497" width="306" height="6" fill="#6b4a20"/>
<rect class="b" x="1541.5" y="509.5" width="305" height="48" rx="5"/>
<text x="1651" y="542" font-size="22" textLength="84" lengthAdjust="spacingAndGlyphs">EXPORT</text>
<rect class="b" x="1541.5" y="564.5" width="305" height="48" rx="5"/>
<text x="1636" y="597" font-size="22" textLength="120" lengthAdjust="spacingAndGlyphs">DEV TOOLS</text>

<!-- TOOLS -->
<rect class="p s" x="30" y="493" width="200" height="233" rx="13"/>
<rect class="b" x="46.5" y="509.5" width="167" height="62" rx="5"/>
<path class="ic" d="M77 560C70 552 62 546 62 535A15 15 0 0 1 92 535C92 546 84 552 77 560Z"/><circle cx="77" cy="536" r="5.5" fill="none" stroke="#f4f2ee" stroke-width="3"/>
<text x="113" y="549" font-size="22" textLength="74" lengthAdjust="spacingAndGlyphs">ROADS</text>
<rect class="b" x="46.5" y="578.5" width="167" height="61" rx="5"/>
<path class="ic" d="M77 590L96 607V625a4 4 0 0 1-4 4H63a4 4 0 0 1-4-4V607zM69 629V612H85V629"/>
<text x="113" y="618" font-size="22" textLength="87" lengthAdjust="spacingAndGlyphs">HOUSES</text>
<rect x="46.5" y="648.5" width="167" height="61" rx="5" fill="#2a6fa6" stroke="#5f4220" stroke-width="1.2"/>
<path class="ic" d="M60 670v-7h34v7M77 663v33M70 696h14"/>
<text x="112" y="687" font-size="22" textLength="51" lengthAdjust="spacingAndGlyphs">TEXT</text>

<!-- SCALE, FOOTER -->
<path d="M71 956h4v14h-4zM208 956h4v14h-4z" fill="#1a0d05"/>
<rect x="73" y="963" width="137" height="5" fill="#1a0d05"/>
<text x="15" y="999" font-size="15" textLength="134" lengthAdjust="spacingAndGlyphs" style="fill:#918c82">[F1] Help &amp; Controls</text>
<text x="118" y="992" font-size="18" textLength="46" lengthAdjust="spacingAndGlyphs" style="fill:#1a1410">842 m</text>
<text x="1706" y="978" font-size="14.5" textLength="202" lengthAdjust="spacingAndGlyphs" style="fill:#8d8371">MapFlow v1.2.8 [FULL Edition]</text>
<text x="1706" y="1002" font-size="14.5" textLength="134" lengthAdjust="spacingAndGlyphs" style="fill:#8d8371">By Sara Spiegelberg</text>

<!-- COLOR PICKER POPUP -->
<rect x="677" y="126" width="431" height="891" rx="5" fill="#0d0d0a" fill-opacity=".6"/>
<rect x="688" y="137" width="361" height="361" fill="url(#hw)"/><rect x="688" y="137" width="361" height="361" fill="url(#vb)"/>
<circle cx="977" cy="462" r="7.5" fill="none" stroke="#c8c8c8" stroke-width="2"/>
<rect x="1055" y="137" width="42" height="361" fill="url(#hue)"/>
<rect x="1054" y="158.5" width="44" height="1.5" fill="#5b7f96"/>
<rect class="b" x="688.5" y="504.5" width="38" height="38" rx="5"/>
<path d="M707 514c3 0 4 3 4 7l-1 2v9l-3 2-3-2v-9l-1-2c0-4 1-7 4-7z" fill="#d8d6d0"/><path d="M706 524h2v7h-2z" fill="#45301a"/>
<rect x="733" y="504" width="319" height="37" fill="#1a0d05"/>
<rect class="b" x="1058.5" y="504.5" width="38" height="38" rx="5"/>
<rect x="1067" y="516" width="19" height="16" fill="#eceae4"/><rect x="1082" y="516" width="1.5" height="16" fill="#45301a"/>
<rect x="688" y="549" width="118" height="44" fill="#2d2d28" fill-opacity=".55"/><rect x="688" y="549" width="118" height="3" fill="#dfddd8"/>
<rect x="811" y="549" width="116" height="44" fill="#1f1f1b" fill-opacity=".55"/>
<rect x="934" y="549" width="118" height="44" fill="#1f1f1b" fill-opacity=".55"/>
<text x="724" y="579" font-size="22" textLength="44" lengthAdjust="spacingAndGlyphs">RGB</text>
<text x="848" y="579" font-size="22" textLength="42" lengthAdjust="spacingAndGlyphs">HSV</text>
<text x="958" y="579" font-size="22" textLength="67" lengthAdjust="spacingAndGlyphs">Linear</text>
<rect class="b" x="1058.5" y="550.5" width="38" height="41" rx="5"/>
<g fill="#b3aea4"><circle cx="1077" cy="562" r="2.8"/><circle cx="1077" cy="570" r="2.8"/><circle cx="1077" cy="578" r="2.8"/></g>
<g fill="#3a3a34" fill-opacity=".5">
<rect x="976" y="598" width="96" height="44" rx="5"/><rect x="976" y="648" width="96" height="43" rx="5"/><rect x="976" y="697" width="96" height="43" rx="5"/><rect x="976" y="747" width="96" height="42" rx="5"/><rect x="976" y="796" width="96" height="43" rx="5"/>
</g>
<rect x="711" y="608" width="259" height="23" fill="url(#gr)"/>
<rect x="711" y="658" width="259" height="22" fill="url(#gg)"/>
<rect x="711" y="708" width="259" height="22" fill="url(#gb)"/>
<rect x="711" y="762" width="259" height="11" rx="4" fill="#2a1c0f"/><rect x="711" y="762" width="130" height="11" rx="4" fill="#54391c"/><circle cx="840" cy="768" r="10" fill="#c9c6c0"/>
<rect x="711" y="806" width="259" height="22" fill="url(#chk)"/><rect x="711" y="806" width="259" height="22" fill="url(#ga)"/>
<g fill="#d9d6d0"><path d="M731 637l5-5 5 5zM718 687l5-5 5 5zM712 737l5-5 5 5zM965 835l5-5 5 5z"/></g>
<text x="690" y="628" font-size="22" style="fill:#d4b88c" textLength="13" lengthAdjust="spacingAndGlyphs">R</text>
<text x="689" y="678" font-size="22" style="fill:#d4b88c" textLength="15" lengthAdjust="spacingAndGlyphs">G</text>
<text x="690" y="727" font-size="22" style="fill:#d4b88c" textLength="12" lengthAdjust="spacingAndGlyphs">B</text>
<text x="691" y="777" font-size="22" style="fill:#d4b88c">I</text>
<text x="688" y="827" font-size="22" style="fill:#d4b88c" textLength="15" lengthAdjust="spacingAndGlyphs">A</text>
<text x="689" y="878" font-size="22" textLength="40" lengthAdjust="spacingAndGlyphs" style="fill:#d4b88c">Hex</text>
<text x="1040" y="628" font-size="22" textLength="24" lengthAdjust="spacingAndGlyphs">26</text>
<text x="1041" y="678" font-size="22" textLength="23" lengthAdjust="spacingAndGlyphs">13</text>
<text x="1052" y="728" font-size="22" textLength="12" lengthAdjust="spacingAndGlyphs">5</text>
<text x="1015" y="777" font-size="22" textLength="49" lengthAdjust="spacingAndGlyphs">+ 0.0</text>
<text x="1027" y="827" font-size="22" textLength="37" lengthAdjust="spacingAndGlyphs">255</text>
<path class="ch" d="M1081 612l5-5 5 5M1081 628l5 5 5-5M1081 662l5-5 5 5M1081 677l5 5 5-5M1081 711l5-5 5 5M1081 727l5 5 5-5M1081 761l5-5 5 5M1081 775l5 5 5-5M1081 825l5 5 5-5"/>
<path d="M1081 811l5-5 5 5" fill="none" stroke="#8a8880" stroke-width="2.2"/>
<text x="761" y="878" font-size="22" textLength="12" lengthAdjust="spacingAndGlyphs">#</text>
<rect x="791" y="844" width="307" height="52" rx="4" fill="#242420" fill-opacity=".75" stroke="#dedcd6" stroke-width="2"/>
<rect x="798" y="854" width="78" height="32" fill="#8a8a8a"/><rect x="798" y="854" width="2" height="32" fill="#fff"/>
<text x="798" y="878" font-size="22" textLength="77" lengthAdjust="spacingAndGlyphs" style="fill:#f2f2f2">1a0d05</text>
<path d="M705 919l5 6-5 6M705 975l5 6-5 6" fill="none" stroke="#8f8c84" stroke-width="1.8"/>
<text x="725" y="933" font-size="22" textLength="100" lengthAdjust="spacingAndGlyphs" style="fill:#cfcdc5">Swatches</text>
<rect class="b" x="1058.5" y="901.5" width="38" height="47" rx="5"/>
<g fill="#b3aea4"><circle cx="1077" cy="916" r="2.8"/><circle cx="1077" cy="924.5" r="2.8"/><circle cx="1077" cy="933" r="2.8"/></g>
<text x="725" y="989" font-size="22" textLength="148" lengthAdjust="spacingAndGlyphs" style="fill:#c4c2ba">Recent Colors</text>
</svg>
</body></html>
